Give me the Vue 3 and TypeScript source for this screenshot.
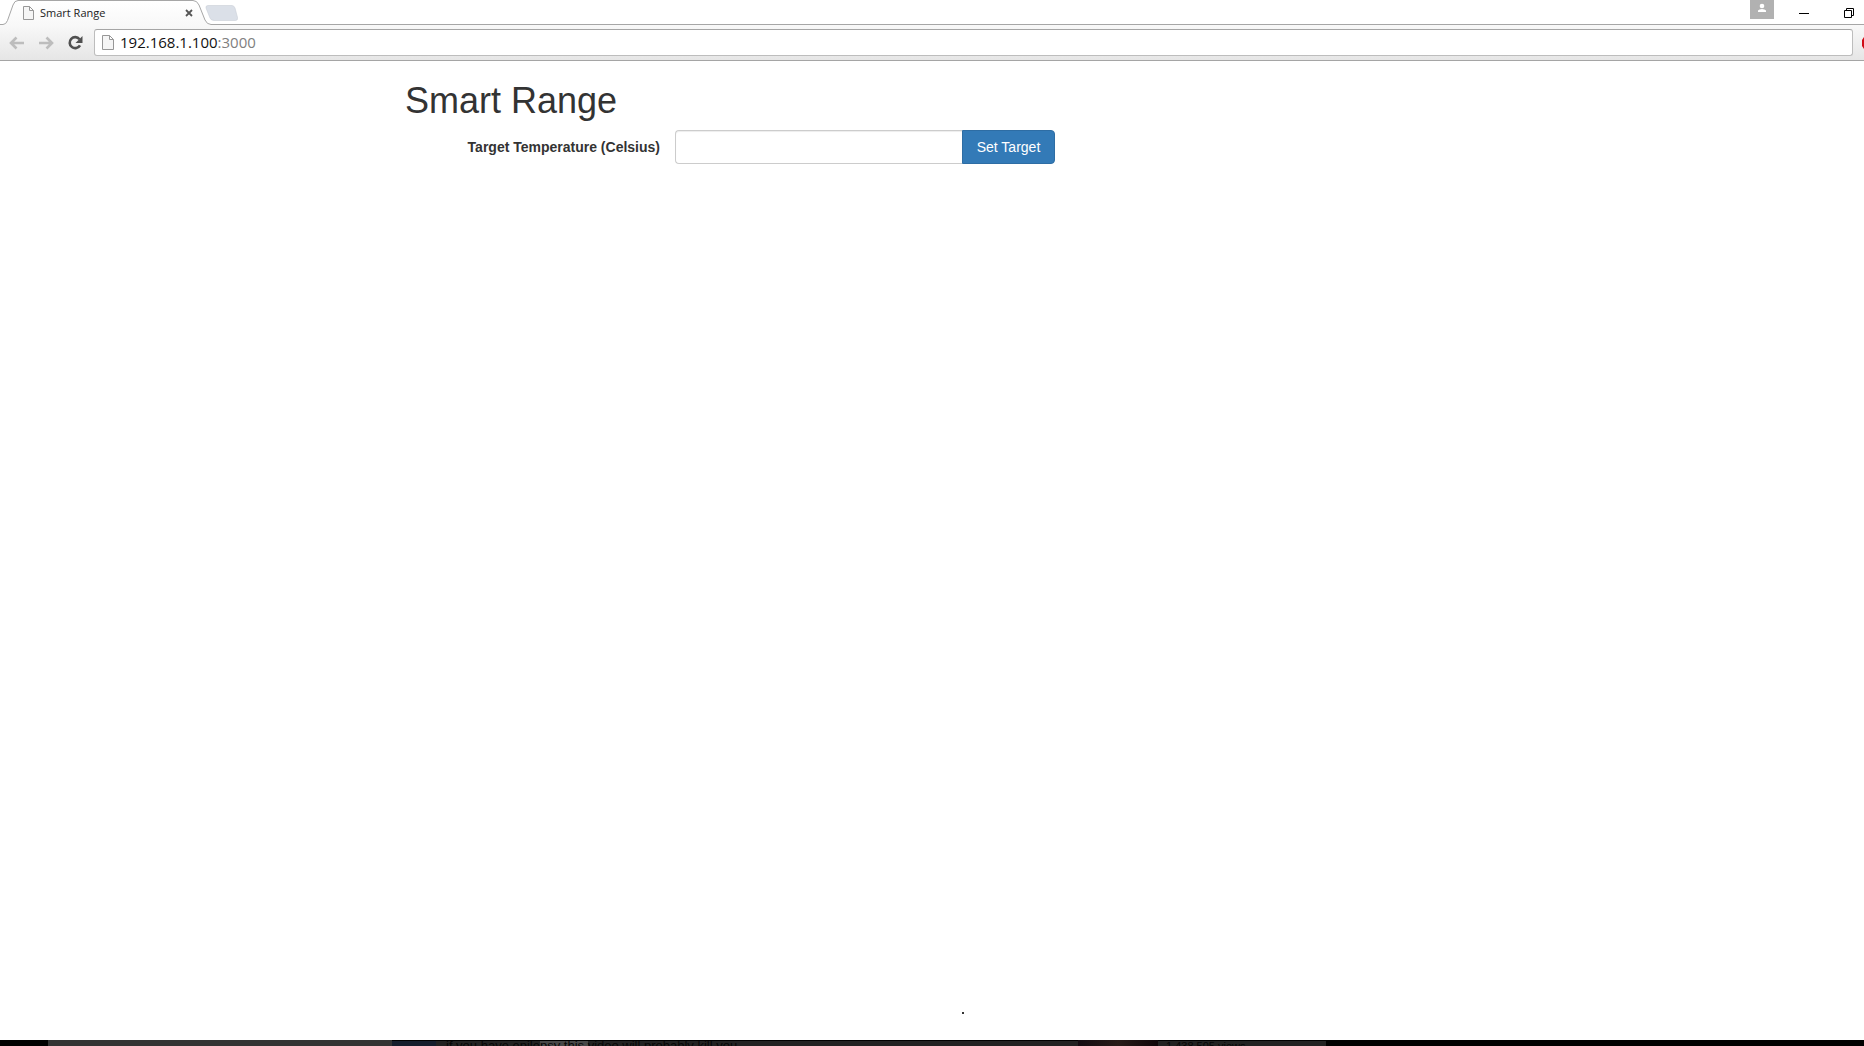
<script setup lang="ts">
import { ref } from 'vue'

const target = ref('')
const title = 'Smart Range'
</script>

<template>
  <div class="window">
    <header class="browser">
      <div class="tabs">
        <svg class="tab-shape" width="240" height="25" viewBox="0 0 240 25" aria-hidden="true">
          <defs>
            <linearGradient id="tabFill" x1="0" y1="0" x2="0" y2="1">
              <stop offset="0" stop-color="#fff" />
              <stop offset="1" stop-color="#f8f8f8" />
            </linearGradient>
          </defs>
          <path d="M208 5.500H232Q234 5.500 235 8L237.500 17.500Q238 20.500 235.500 20.500H214Q211 20.500 210 18L206 8Q205.500 5.500 208 5.500Z" fill="#dbe0e8" stroke="#c9ced6" stroke-width=".6" />
          <path d="M0 24.500H3Q6 24.500 7.500 20.500L13 5Q14.500 .500 18 .500H193Q197 .500 199 5L205 20Q207 24.500 211 24.500H240V25H0Z" fill="url(#tabFill)" />
          <path d="M0 24.500H3Q6 24.500 7.500 20.500L13 5Q14.500 .500 18 .500H193Q197 .500 199 5L205 20Q207 24.500 211 24.500H240" fill="none" stroke="#a6a6a6" />
        </svg>
        <div class="tab">
          <svg width="11" height="14" viewBox="0 0 11 14" aria-hidden="true"><path d="M.5.5H6.500L10.500 4.500V13.500H.5ZM6.500.5V4.500H10.500" fill="#f5f5f5" stroke="#979797" /></svg>
          <span class="tab-title">{{ title }}</span>
          <button class="plain" type="button" aria-label="Close tab">
            <svg width="8" height="8" viewBox="0 0 8 8"><path d="M1 1L7 7M7 1L1 7" stroke="#555" stroke-width="1.800" /></svg>
          </button>
        </div>
        <div class="controls">
          <button class="plain user" type="button" aria-label="Profile">
            <svg width="24" height="19" viewBox="0 0 24 19"><rect width="24" height="19" fill="#b1b1b1" /><circle cx="12" cy="6" r="2.300" fill="#fff" /><path d="M8 12V10.500Q9 9 12 9T16 10.500V12Z" fill="#fff" /></svg>
          </button>
          <button class="plain min" type="button" aria-label="Minimize">
            <svg width="10" height="10" viewBox="0 0 10 10"><path d="M0 5.500H10" stroke="#000" /></svg>
          </button>
          <button class="plain" type="button" aria-label="Restore">
            <svg width="10" height="10" viewBox="0 0 10 10"><path d="M.5 2.500H7.500V9.500H.5ZM2.500 2.500V.5H9.500V7.500H7.500" fill="none" stroke="#000" /></svg>
          </button>
        </div>
      </div>
      <div class="toolbar">
        <button class="plain" type="button" aria-label="Back">
          <svg width="16" height="14" viewBox="0 0 16 14"><path d="M7.500 1.500L2 7L7.500 12.500M2.500 7H15" fill="none" stroke="#bdbdbd" stroke-width="2.600" /></svg>
        </button>
        <button class="plain" type="button" aria-label="Forward">
          <svg width="16" height="14" viewBox="0 0 16 14"><path d="M8.500 1.500L14 7L8.500 12.500M13.500 7H1" fill="none" stroke="#bdbdbd" stroke-width="2.600" /></svg>
        </button>
        <button class="plain" type="button" aria-label="Reload">
          <svg width="16" height="16" viewBox="0 0 16 16"><path d="M12.500 4.200A5.500 5.500 0 1 0 13 10.300" fill="none" stroke="#505050" stroke-width="2.600" /><path d="M15.500 1V8H8.500Z" fill="#505050" /></svg>
        </button>
        <div class="address">
          <svg width="12" height="15" viewBox="0 0 12 15" aria-hidden="true"><path d="M.5.5H7.500L11.500 4.500V14.500H.5ZM7.500.5V4.500H11.500" fill="#f5f5f5" stroke="#979797" /></svg>
          <span class="url">192.168.1.100<span class="port">:3000</span></span>
        </div>
        <svg width="2" height="12" viewBox="0 0 2 12" aria-hidden="true"><path d="M2 0L0 3V9L2 12Z" fill="#d00b16" /></svg>
      </div>
    </header>

    <main>
      <h1>{{ title }}</h1>
      <form @submit.prevent>
        <label for="target">Target Temperature (Celsius)</label>
        <div class="group">
          <input id="target" v-model="target" type="text" />
          <button type="submit">Set Target</button>
        </div>
      </form>
      <span class="speck"></span>
    </main>

    <footer>
      <div class="black"></div>
      <div class="grey"></div>
      <div class="thumb"></div>
      <div class="caption">if you have epilepsy this video will probably kill you</div>
      <div class="still"></div>
      <div class="views">1,438,505 views</div>
    </footer>
  </div>
</template>

<style>
body {
  margin: 0;
}
</style>

<style scoped>
.window {
  display: flex;
  flex-direction: column;
  height: 100vh;
  overflow: hidden;
  background: #fff;
  font-family: "Liberation Sans", Arial, sans-serif;
}
.plain {
  display: flex;
  padding: 0;
  border: 0;
  background: none;
}
.browser {
  flex: none;
}
.tabs {
  position: relative;
  display: flex;
  height: 25px;
  background: linear-gradient(#a6a6a6, #a6a6a6) 239px 24px / 100% 1px no-repeat #fff;
}
.tab-shape {
  position: absolute;
  top: 0;
  left: 0;
}
.tab {
  position: relative;
  display: flex;
  align-items: center;
  width: 170px;
  padding-left: 23px;
}
.tab-title {
  flex: 1;
  margin-left: 6px;
  color: #222;
  font: 11px/24px "Open Sans", sans-serif;
}
.controls {
  display: flex;
  align-items: center;
  margin-left: auto;
  padding-right: 10px;
}
.user {
  align-self: flex-start;
  margin-right: 25px;
}
.min {
  margin-right: 35px;
}
.toolbar {
  display: flex;
  align-items: center;
  height: 35px;
  padding-left: 9px;
  gap: 13px;
  border-bottom: 1px solid #a5a5a5;
  background: linear-gradient(#f8f8f8, #e6e6e6);
}
.address {
  display: flex;
  flex: 1;
  align-items: center;
  box-sizing: border-box;
  height: 27px;
  margin-right: -4px;
  margin-left: -2px;
  padding-left: 7px;
  border: 1px solid #bdbdbd;
  border-top-color: #a5a5a5;
  border-radius: 3px;
  background: #fff;
}
.url {
  margin-left: 6px;
  padding-bottom: 2px;
  color: #111;
  font: 15px/22px "Open Sans", sans-serif;
}
.port {
  color: #808080;
}
main {
  position: relative;
  flex: 1;
  padding: 20px 0 0 405px;
  color: #333;
}
h1 {
  margin: 0 0 9px;
  font-size: 36px;
  font-weight: 500;
  line-height: 40px;
}
form {
  display: flex;
  align-items: center;
  font-size: 14px;
  line-height: 20px;
}
label {
  width: 255px;
  font-weight: 700;
  text-align: right;
}
.group {
  display: flex;
  width: 380px;
  margin-left: 15px;
}
.group input {
  flex: 1;
  min-width: 0;
  box-sizing: border-box;
  height: 34px;
  padding: 6px 12px;
  border: 1px solid #ccc;
  border-right: 0;
  border-radius: 4px 0 0 4px;
  box-shadow: inset 0 1px 1px rgba(0, 0, 0, 0.075);
  font: inherit;
}
.group button {
  width: 93px;
  height: 34px;
  padding: 0;
  border: 1px solid #2e6da4;
  border-radius: 0 4px 4px 0;
  background: #337ab7;
  color: #fff;
  font: inherit;
}
.speck {
  position: absolute;
  right: 900px;
  bottom: 26px;
  width: 2px;
  height: 2px;
  background: #333;
}
footer {
  display: flex;
  flex: none;
  height: 6px;
  overflow: hidden;
  background: #000;
}
.black {
  width: 48px;
}
.grey {
  width: 344px;
  background: #333;
}
.thumb {
  width: 44px;
  margin-top: 1px;
  background: #151d2c;
}
.caption,
.views {
  box-sizing: border-box;
  margin-top: 1px;
  background: #222;
  color: #070707;
  line-height: 10px;
  white-space: nowrap;
}
.caption {
  width: 642px;
  padding-left: 10px;
  font-size: 13px;
  background: linear-gradient(90deg, #222 104px, #484848 104px, #484848 152px, #222 152px);
}
.still {
  width: 80px;
  background: linear-gradient(90deg, #140c12, #281b18, #100609);
}
.views {
  width: 168px;
  padding-left: 8px;
  font-size: 11px;
}
</style>
